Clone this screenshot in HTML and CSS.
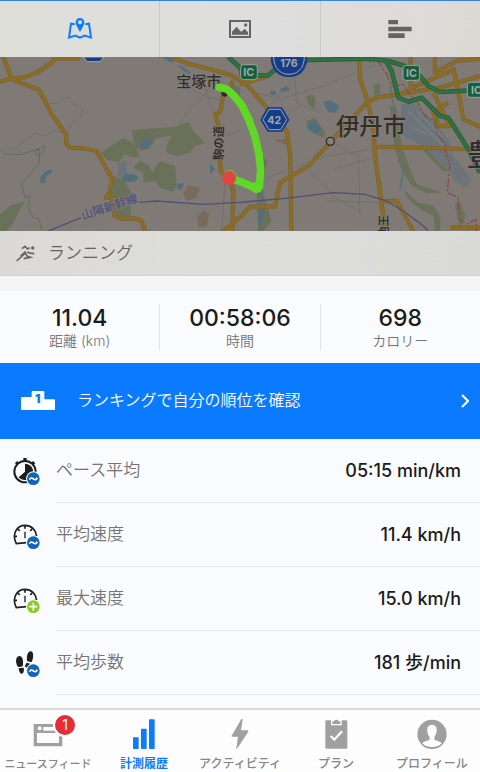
FILE: index.html
```html
<!DOCTYPE html>
<html lang="ja">
  <head>
    <meta charset="UTF-8" />
    <meta name="viewport" content="width=device-width, initial-scale=1.0" />
    <title>計測履歴</title>
    <link rel="stylesheet" href="styles.css">
  </head>
  <body>
    <header class="view-tabs">
      <button type="button" class="view-tab active" aria-label="地図">
        <svg width="26" height="24" viewBox="0 0 78 72" fill="none">
          <path d="M23 22 L12 20 L6 62 L25 56 L39 62 L53 56 L72 62 L66 20 L55 22" stroke="currentColor" stroke-width="6" />
          <path fill="currentColor" fill-rule="evenodd" d="M39 3 C31 3 26 9 26 17 C26 25 34 33 39 46 C44 33 52 25 52 17 C52 9 47 3 39 3 Z M39 10 A6 6 0 1 1 39 22 A6 6 0 1 1 39 10 Z" />
        </svg>
      </button>
      <button type="button" class="view-tab" aria-label="写真">
        <svg width="24" height="20" viewBox="0 0 72 60">
          <path fill="none" stroke="currentColor" stroke-width="6" d="M6 6H66V54H6Z" />
          <path fill="currentColor" d="M12 47V38L26 23L36 35L40 38L50 29L60 40V47Z" />
          <circle cx="53" cy="18" r="5" fill="currentColor" />
        </svg>
      </button>
      <button type="button" class="view-tab" aria-label="グラフ">
        <svg width="24" height="20" viewBox="0 0 72 60" fill="currentColor">
          <path d="M1 3H30V16H1ZM1 23H71V37H1ZM1 43H50V57H1Z" />
        </svg>
      </button>
    </header>

    <main class="content">
      <svg class="map" viewBox="0 3 1440 522" preserveAspectRatio="xMidYMid slice" role="img" aria-label="ルート地図">
        <rect y="3" width="1440" height="522" fill="#7f7a75" />

        <!-- parks -->
        <g fill="#697258">
          <path d="M395 222L530 212L565 198L585 230L615 262L585 270L570 290L530 300L500 290L500 270L515 240L470 245L450 275L425 285L405 272Z" />
          <path d="M303 290L340 265L370 245L400 262L420 300L400 305L375 295L355 318L320 312Z" />
          <path d="M400 335L420 315L450 330L455 350L480 315L525 330L530 385L520 408L480 395L465 375L430 380L430 350Z" />
          <path d="M340 360L375 375L392 410L392 482L350 480L330 425Z" />
          <path d="M0 475L30 450L75 435L55 470L40 500L20 525H0Z" />
          <path d="M690 80L720 95V150L700 115Z" />
          <path d="M1122 84H1140V118H1122ZM918 120L940 116L948 135L942 160L925 145ZM918 195L945 185L975 230L970 245L930 225Z" />
          <path d="M1170 150L1190 155L1205 270L1230 340L1250 385L1330 410L1280 412L1235 390L1205 340L1185 280Z" />
          <path d="M1210 400L1255 440L1300 450L1322 485L1320 525H1305L1300 480L1260 460L1225 430Z" />
          <path d="M780 280L800 320L785 400L815 495L790 525H775L770 440Z" />
          <path d="M1375 430L1398 480L1380 515L1365 450ZM1280 280L1345 345H1330L1270 285Z" />
        </g>
        <g fill="#6d7479">
          <path d="M1205 145L1240 140L1300 195L1345 250L1360 300L1415 370L1400 395L1360 375L1350 345L1280 280L1200 235Z" />
          <path d="M355 320L380 315L382 355L355 365Z" />
        </g>
        <path fill="none" stroke="#787e82" stroke-width="5" d="M1225 165L1350 290M1250 165L1330 245M1240 215L1280 235" />

        <!-- water -->
        <g fill="#536f7c">
          <path d="M420 258L435 246L454 252L450 270L435 278L420 270Z" />
          <ellipse cx="390" cy="366" rx="25" ry="12" />
          <path d="M132 350L150 340L160 346L140 360L132 382L120 380L122 362ZM532 384L550 382V392L540 402L530 395ZM630 322L645 338L630 355Z" />
          <path d="M485 3H510L525 15L515 20ZM530 28L545 30L572 50L565 54Z" />
          <path d="M970 138L990 133L1020 150L1005 170L985 168ZM920 205L945 193L965 220L950 236L925 222Z" />
          <path d="M812 105H827V118H812ZM840 98L855 92L867 95V105L845 108Z" />
          <path d="M775 330L785 400L775 420ZM775 470L795 450L785 500L775 520Z" />
        </g>
        <path fill="none" stroke="#5b7178" stroke-width="5" d="M1170 90L1185 170M1195 310L1210 345L1200 400M1100 3L1112 20M778 325L790 440" />
        <path fill="#796b59" d="M550 410L565 388L600 395L590 425L560 434ZM592 480L610 463L628 472L620 510L595 515ZM822 252L865 248L860 268Z" />

        <!-- minor streets -->
        <g fill="none" stroke="#6d6b68" stroke-width="2">
          <path d="M150 142H175L185 128L210 124L220 143L250 157L240 185L215 200L200 235L165 225L130 240L105 230L90 245L65 255L55 275L15 280" />
          <path d="M660 20L620 110L560 170L535 210M575 100L625 125L660 130M610 85L645 175M665 240L720 225M675 380L665 525M395 222L405 260" />
          <path d="M865 3L885 60L890 140L960 170M885 60L800 160M900 145L840 200M965 240L1050 290L1075 300L1080 470M920 330L1000 420L1085 470M800 365L980 300L1120 280M1000 340L1120 305M980 435L1160 440" />
          <path d="M770 110L840 130L970 90L1120 30" />
        </g>
        <path fill="none" stroke="#4a6e4a" stroke-width="2" d="M0 280L18 295H65L105 282L135 270L125 298L106 295V282L118 280V320L65 385L75 425L90 420L85 455L100 485L118 490L125 525" />

        <!-- main roads -->
        <defs>
          <path id="roads-west" d="M10 3L35 70L118 102L155 175L198 235V262L210 275L245 276L290 285L337 370L328 410L318 425H340L343 478L365 488L405 487L425 495L435 525M0 78L30 68L70 65L115 48L140 30L158 20L160 8H240" />
          <path id="roads-middle" d="M515 3L560 22L650 45L695 58L740 85L860 225L870 290L872 370L874 525M700 75L668 125L660 170L645 175L655 205L662 345L690 375L700 405L697 525M720 85L790 65L805 58M720 485L750 452H825L840 380L925 330L1100 140L1130 125L1320 95L1440 60" />
          <path id="roads-east" d="M1078 3L1080 70L1105 140L1120 220L1125 300L1150 480V525M1120 272L1440 280M1150 435H1190L1240 525M1232 3V105M1305 3V50L1370 15L1440 8M1360 35L1375 110L1390 190L1440 212M1360 42L1235 95M1300 110L1350 210H1315L1300 170L1345 140M1350 515H1440M670 525L730 475" />
        </defs>
        <g fill="none" stroke="#7a6040" stroke-width="13" stroke-linejoin="round">
          <use href="#roads-west" />
          <use href="#roads-middle" />
          <use href="#roads-east" />
        </g>
        <g fill="none" stroke="#8a6d20" stroke-width="9" stroke-linejoin="round">
          <use href="#roads-west" />
          <use href="#roads-middle" />
          <use href="#roads-east" />
        </g>

        <!-- prefecture border -->
        <path fill="none" stroke="#884d48" stroke-width="4" stroke-dasharray="26 6 8 6" d="M1130 10L1160 55L1175 90L1210 85L1225 110L1250 135L1275 180L1305 195L1310 230L1335 265L1340 300L1350 325L1342 410L1375 425L1378 490L1400 505L1428 490L1430 525" />

        <!-- expressways -->
        <g fill="none" stroke-linejoin="round">
          <path stroke="#28613a" stroke-width="14" d="M720 58H805L850 20L930 12L1110 8L1165 15L1215 30L1260 60L1285 90L1320 108L1440 102M1155 10L1175 45L1195 125L1225 137L1265 125L1320 180L1345 185L1405 280L1440 350M685 3L725 40V60" />
          <path stroke="#327043" stroke-width="8" d="M720 58H805L850 20L930 12L1110 8L1165 15L1215 30L1260 60L1285 90L1320 108L1440 102M1155 10L1175 45L1195 125L1225 137L1265 125L1320 180L1345 185L1405 280L1440 350M685 3L725 40V60" />
        </g>

        <!-- shinkansen -->
        <path fill="none" stroke="#4d5077" stroke-width="4" d="M145 525L243 485M418 439L470 435L610 445L720 439L850 428L1000 410L1095 415L1160 435L1210 465L1270 510L1285 525" />
        <text class="rail-name" transform="translate(249 491) rotate(-18)">山陽新幹線</text>

        <!-- road numbers -->
        <g fill="#173d87" stroke="#a0a7ae" stroke-width="3">
          <path d="M250 3H312L300 17H262Z" />
          <path stroke="#173d87" stroke-width="8" d="M816 3C816 40 837 59 867 59C897 59 918 40 918 3Z" />
          <path d="M821 3C821 36 841 55 867 55C893 55 913 36 913 3" />
          <path stroke="#173d87" stroke-width="9" stroke-linejoin="round" d="M786 191L805 158H844L863 191L844 223H805Z" />
          <path d="M789 191L807 160H842L860 191L842 221H807Z" />
        </g>
        <g class="road-number">
          <text x="867" y="32">176</text>
          <text x="823" y="203">42</text>
        </g>
        <g fill="#155e3e" stroke="#98a69c" stroke-width="3">
          <rect x="722" y="26" width="50" height="45" rx="9" />
          <rect x="1209" y="28" width="50" height="45" rx="9" />
          <rect x="1402" y="79" width="50" height="45" rx="9" />
        </g>
        <g class="road-number">
          <text x="746" y="60">IC</text>
          <text x="1234" y="62">IC</text>
          <text x="1429" y="113">IC</text>
        </g>

        <!-- place names -->
        <g class="place">
          <text x="529" y="94" font-size="45">宝塚市</text>
          <text x="1008" y="237" font-size="70">伊丹市</text>
          <text x="1400" y="327" font-size="88">豊</text>
          <text class="road-name" transform="translate(669 312) rotate(-90)">駒の道</text>
          <text class="road-name" transform="translate(1165 545) rotate(-90)">池王</text>
        </g>
        <circle cx="991" cy="256" r="12" fill="#85807a" stroke="#302e2d" stroke-width="4" />

        <!-- recorded run -->
        <circle cx="674" cy="112" r="10" fill="#2c2b2a" />
        <path fill="none" stroke="#61d827" stroke-width="23" stroke-linecap="round" stroke-linejoin="round" d="M657 94L680 99L700 117L725 147L747 192L765 242L777 294L782 342L778 392L769 399L752 390L711 373L688 365" />
        <circle cx="771" cy="394" r="17" fill="#61d827" />
        <circle cx="689" cy="361" r="20" fill="#78b33c" />
        <circle cx="687" cy="366" r="21" fill="#e04545" />
      </svg>

      <section class="activity">
        <svg width="20" height="18" viewBox="0 0 60 54" fill="none" stroke="currentColor" stroke-width="5">
          <path d="M2 51L26 29M18 14L27 7L35 15L41 11M14 36L27 24L34 37L43 40L23 44M38 27L55 29M34 24L43 28" />
          <circle cx="50" cy="12" r="5" fill="currentColor" stroke="none" />
        </svg>
        <h1>ランニング</h1>
      </section>

      <dl class="summary">
        <div class="stat">
          <dt>距離 (km)</dt>
          <dd>11.04</dd>
        </div>
        <div class="stat">
          <dt>時間</dt>
          <dd>00:58:06</dd>
        </div>
        <div class="stat">
          <dt>カロリー</dt>
          <dd>698</dd>
        </div>
      </dl>

      <a class="ranking" href="#ranking">
        <svg width="34" height="20" viewBox="0 0 102 60">
          <path fill="#fff" d="M0 21Q0 18 3 18H32V3Q32 0 35 0H67Q70 0 70 3V25H99Q102 25 102 28V57H0Z" />
          <text x="50" y="35" class="podium-number">1</text>
        </svg>
        <span>ランキングで自分の順位を確認</span>
        <svg class="chevron" width="8" height="14" viewBox="0 0 8 14">
          <path fill="none" stroke="#fff" stroke-width="2" d="M1 1L7 7L1 13" />
        </svg>
      </a>

      <dl class="details">
        <div class="detail">
          <svg width="28" height="28" viewBox="0 0 84 84">
            <path fill="none" stroke="#1c1e1d" stroke-width="6" d="M36 9A32 32 0 1 0 36 73A32 32 0 0 0 36 9" />
            <path fill="#1c1e1d" d="M36 17V41L17 58C27 69 44 68 54 59C68 43 59 17 36 17ZM31 0H41V10H31ZM6 15L13 9L18 15L11 21ZM54 15L60 9L67 16L61 22Z" />
            <circle cx="61" cy="62" r="22" fill="#fafbfd" />
            <circle cx="61" cy="62" r="19" fill="#1263b9" />
            <path fill="none" stroke="#fff" stroke-width="5" d="M50 65Q52 58 58 61L63 64Q70 67 73 59" />
          </svg>
          <dt>ペース平均</dt>
          <dd>05:15 min/km</dd>
        </div>
        <div class="detail">
          <svg width="28" height="28" viewBox="0 0 84 84">
            <g fill="none" stroke="#1c1e1d" stroke-width="5">
              <path d="M40 62L10 65C-5 36 12 10 36 10C55 10 69 24 71 42M36 11V20M15 21L20 27M57 21L52 27M5 43H12M62 43H70" />
              <path stroke-width="4" d="M36 29V49" />
            </g>
            <circle cx="61" cy="62" r="22" fill="#fafbfd" />
            <circle cx="61" cy="62" r="19" fill="#1263b9" />
            <path fill="none" stroke="#fff" stroke-width="5" d="M50 65Q52 58 58 61L63 64Q70 67 73 59" />
          </svg>
          <dt>平均速度</dt>
          <dd>11.4 km/h</dd>
        </div>
        <div class="detail">
          <svg width="28" height="28" viewBox="0 0 84 84">
            <g fill="none" stroke="#1c1e1d" stroke-width="5">
              <path d="M40 62L10 65C-5 36 12 10 36 10C55 10 69 24 71 42M36 11V20M15 21L20 27M57 21L52 27M5 43H12M62 43H70" />
              <path stroke-width="4" d="M36 29V49" />
            </g>
            <circle cx="61" cy="62" r="22" fill="#fafbfd" />
            <circle cx="61" cy="62" r="19" fill="#8bc926" />
            <path stroke="#fff" stroke-width="5" d="M61 50V74M49 62H73" />
          </svg>
          <dt>最大速度</dt>
          <dd>15.0 km/h</dd>
        </div>
        <div class="detail">
          <svg width="28" height="28" viewBox="0 0 84 84">
            <path fill="#1c1e1d" d="M20 18C10 18 8 30 10 39C11 46 14 52 19 51L29 49C31 41 32 19 20 18ZM17 55L32 53C34 64 31 71 26 71C21 71 18 65 17 55ZM54 4C43 4 41 18 42 33L55 37C61 31 64 5 54 4ZM41 38L51 41C49 49 44 55 38 52C34 49 38 43 41 38Z" />
            <circle cx="61" cy="62" r="22" fill="#fafbfd" />
            <circle cx="61" cy="62" r="19" fill="#1263b9" />
            <path fill="none" stroke="#fff" stroke-width="5" d="M50 65Q52 58 58 61L63 64Q70 67 73 59" />
          </svg>
          <dt>平均歩数</dt>
          <dd>181 歩/min</dd>
        </div>
      </dl>
    </main>

    <nav class="tab-bar">
      <a class="tab" href="#feed">
        <span class="tab-icon">
          <svg width="30" height="30" viewBox="0 0 90 90">
            <path fill="#a0a0a0" fill-rule="evenodd" d="M2 15H88V82H2ZM12 42H78V72H12Z" />
            <path fill="#fff" d="M31 24H88V35H31Z" />
            <circle cx="20" cy="28" r="6" fill="#fff" />
          </svg>
          <span class="badge">1</span>
        </span>
        <span class="tab-label long">ニュースフィード</span>
      </a>
      <a class="tab active" href="#history">
        <span class="tab-icon">
          <svg width="30" height="30" viewBox="0 0 90 90" fill="currentColor">
            <rect x="12" y="55" width="17" height="35" rx="2" />
            <rect x="36" y="29" width="17" height="61" rx="2" />
            <rect x="60" y="1" width="17" height="89" rx="2" />
          </svg>
        </span>
        <span class="tab-label">計測履歴</span>
      </a>
      <a class="tab" href="#activity">
        <span class="tab-icon">
          <svg width="30" height="30" viewBox="0 0 90 90" fill="#a0a0a0">
            <path d="M49 0L20 50Q19 53 22 53H39L34 89Q35 91 37 88L70 38Q71 34 67 34H48L53 2Q52-2 49 0Z" />
          </svg>
        </span>
        <span class="tab-label">アクティビティ</span>
      </a>
      <a class="tab" href="#plan">
        <span class="tab-icon">
          <svg width="30" height="30" viewBox="0 0 90 90">
            <path fill="#a0a0a0" d="M15 4H75Q79 4 79 8V85Q79 89 75 89H17Q13 89 13 85V8Q13 4 15 4Z" />
            <path fill="#a0a0a0" stroke="#fff" stroke-width="4" d="M32 17V5H38Q38 0 46 0Q54 0 54 5H60V17Z" />
            <path fill="none" stroke="#fff" stroke-width="7" d="M29 51L40 62L63 37" />
          </svg>
        </span>
        <span class="tab-label">プラン</span>
      </a>
      <a class="tab" href="#profile">
        <span class="tab-icon">
          <svg width="30" height="30" viewBox="0 0 90 90">
            <circle cx="45" cy="46" r="44" fill="#a0a0a0" />
            <path fill="#fff" d="M31 31C31 13 59 13 59 31C60 42 55 50 52 55V62L70 69Q76 72 73 74C58 87 32 87 17 74Q14 72 20 69L38 62V55C34 49 30 42 31 31Z" />
          </svg>
        </span>
        <span class="tab-label">プロフィール</span>
      </a>
    </nav>
  </body>
</html>
```

FILE: styles.css
```css
/* General Reset */
* {
  margin: 0;
  padding: 0;
  box-sizing: border-box;
}

body {
  font-family: Inter, "Noto Sans CJK JP", sans-serif;
  background-color: #fafbfd;
  color: #1a1c1c;
  display: flex;
  flex-direction: column;
  height: 100vh;
  overflow: hidden;
}

a {
  color: inherit;
  text-decoration: none;
}

svg {
  display: block;
  flex-shrink: 0;
}

/* Map / photo / chart switch */
.view-tabs {
  display: flex;
  flex-shrink: 0;
  height: 57px;
  border-top: 1px solid #3583dc;
  background: linear-gradient(100deg, #dedfd9, #dededf 55%, #dddad5);
}

.view-tab {
  flex: 1;
  display: flex;
  justify-content: center;
  align-items: center;
  border: none;
  border-right: 1px solid #c9cac7;
  background: none;
  color: #646463;
  cursor: pointer;
}

.view-tab:last-child {
  border-right: none;
}

.view-tab.active {
  color: #0b7cff;
}

.content {
  flex: 1;
  min-height: 0;
  overflow: hidden;
}

/* Map */
.map {
  width: 100%;
  height: 174px;
}

.place {
  fill: #302e2d;
  stroke: #85807a;
  stroke-width: 4px;
  paint-order: stroke;
  font-weight: 500;
}

.road-name {
  font-size: 34px;
  font-weight: 700;
}

.rail-name {
  fill: #4d5077;
  stroke: #85807a;
  stroke-width: 4px;
  paint-order: stroke;
  font-size: 35px;
  font-weight: 500;
}

.road-number {
  fill: #a0a7ae;
  font-size: 32px;
  font-weight: 700;
  text-anchor: middle;
}

/* Activity name */
.activity {
  display: flex;
  align-items: center;
  gap: 12px;
  height: 45px;
  padding: 0 16px;
  background: linear-gradient(100deg, #dcdad7, #dddeda 50%, #dadad8);
  border-bottom: 1px solid #d3d4d1;
  color: #646463;
}

.activity h1 {
  font-size: 17px;
  font-weight: 350;
  line-height: 24px;
}

/* Summary */
.summary {
  display: flex;
  height: 87px;
  padding: 13px 0;
  border-top: 15px solid #f5f5f5;
}

.stat {
  flex: 1;
  display: flex;
  flex-direction: column-reverse;
  justify-content: center;
  text-align: center;
  border-right: 1px solid #e2e3e5;
}

.stat:last-child {
  border-right: none;
}

.stat dt {
  color: #747576;
  font-size: 14px;
  font-weight: 350;
  line-height: 18px;
}

.stat dd {
  font-size: 23px;
  font-weight: 500;
  line-height: 28px;
}

/* Ranking banner */
.ranking {
  display: flex;
  align-items: center;
  gap: 22px;
  height: 76px;
  padding: 0 11px 0 21px;
  background-color: #0a7aff;
  color: #fff;
  font-size: 16px;
  font-weight: 350;
  line-height: 24px;
}

.ranking span {
  padding-bottom: 2px;
}

.chevron {
  margin-left: auto;
}

.podium-number {
  fill: #0a7aff;
  font-size: 36px;
  font-weight: 900;
  text-anchor: middle;
}

/* Details */
.detail {
  display: flex;
  align-items: center;
  height: 64px;
  padding: 0 19px 0 13px;
  background: linear-gradient(#e9eaec, #e9eaec) 56px 100% / 100% 1px no-repeat;
}

.detail svg {
  margin-top: 2px;
}

.detail dt {
  margin-left: 15px;
  padding-bottom: 2px;
  color: #747576;
  font-size: 17px;
  font-weight: 350;
  line-height: 24px;
}

.detail dd {
  margin-left: auto;
  padding-bottom: 1px;
  font-size: 18px;
  font-weight: 500;
  line-height: 24px;
}

/* Bottom navigation */
.tab-bar {
  display: flex;
  flex-shrink: 0;
  height: 64px;
  padding-top: 9px;
  border-top: 2px solid #d9dadd;
  background-color: #fdfdfe;
}

.tab {
  flex: 1;
  min-width: 0;
  display: flex;
  flex-direction: column;
  align-items: center;
  gap: 6px;
  color: #858585;
}

.tab.active {
  color: #0b7cff;
}

.tab-icon {
  position: relative;
}

.tab-label {
  font-size: 12px;
  font-weight: 500;
  line-height: 18px;
  white-space: nowrap;
}

.tab-label.long {
  font-size: 11px;
}

.tab.active .tab-label {
  font-weight: 700;
}

.badge {
  position: absolute;
  top: -6px;
  right: -14px;
  width: 24px;
  height: 24px;
  border: 2px solid #fdfdfe;
  border-radius: 50%;
  background-color: #e52d38;
  color: #fff;
  font-size: 14px;
  line-height: 20px;
  text-align: center;
}
```
